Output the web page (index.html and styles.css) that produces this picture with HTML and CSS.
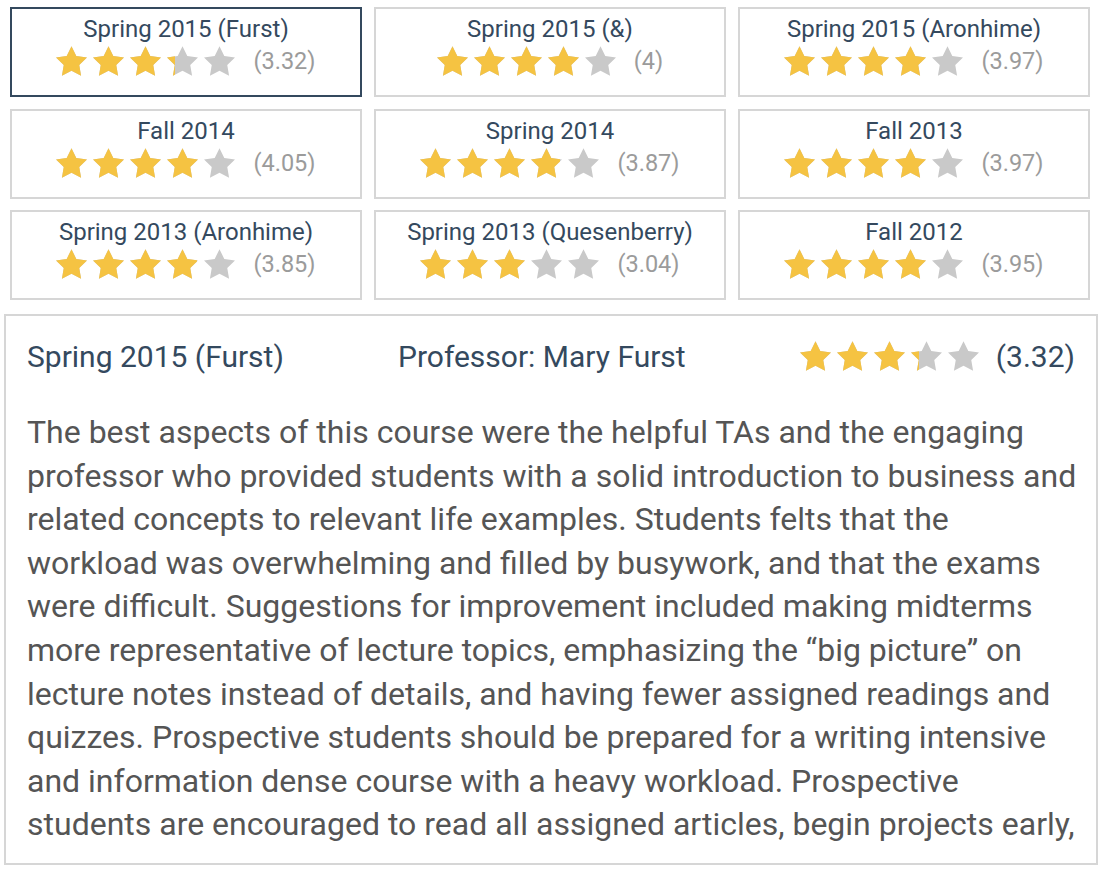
FILE: index.html
```html
<!DOCTYPE html>
<html>
<head>
<meta charset="utf-8">
<link rel="stylesheet" href="styles.css">
</head>
<body>
<svg class="defs" width="0" height="0" aria-hidden="true">
  <symbol id="star" viewBox="2 2 20 19.1">
    <path d="M12 2l3.09 6.26L22 9.27l-5 4.87 1.18 6.88L12 17.77l-6.18 3.25L7 14.140 2 9.27l6.91-1.01L12 2z"/>
  </symbol>
</svg>

<div class="page">
  <div class="terms">
    <div class="term active">
      <div class="term-title">Spring 2015 (Furst)</div>
      <div class="rating-row">
        <div class="stars">
          <div class="stars-bg"><svg><use href="#star"/></svg><svg><use href="#star"/></svg><svg><use href="#star"/></svg><svg><use href="#star"/></svg><svg><use href="#star"/></svg></div>
          <div class="stars-fg" style="width:66.4%"><svg><use href="#star"/></svg><svg><use href="#star"/></svg><svg><use href="#star"/></svg><svg><use href="#star"/></svg><svg><use href="#star"/></svg></div>
        </div>
        <span class="score">(3.32)</span>
      </div>
    </div>
    <div class="term">
      <div class="term-title">Spring 2015 (&amp;)</div>
      <div class="rating-row">
        <div class="stars">
          <div class="stars-bg"><svg><use href="#star"/></svg><svg><use href="#star"/></svg><svg><use href="#star"/></svg><svg><use href="#star"/></svg><svg><use href="#star"/></svg></div>
          <div class="stars-fg" style="width:80%"><svg><use href="#star"/></svg><svg><use href="#star"/></svg><svg><use href="#star"/></svg><svg><use href="#star"/></svg><svg><use href="#star"/></svg></div>
        </div>
        <span class="score">(4)</span>
      </div>
    </div>
    <div class="term">
      <div class="term-title">Spring 2015 (Aronhime)</div>
      <div class="rating-row">
        <div class="stars">
          <div class="stars-bg"><svg><use href="#star"/></svg><svg><use href="#star"/></svg><svg><use href="#star"/></svg><svg><use href="#star"/></svg><svg><use href="#star"/></svg></div>
          <div class="stars-fg" style="width:79.4%"><svg><use href="#star"/></svg><svg><use href="#star"/></svg><svg><use href="#star"/></svg><svg><use href="#star"/></svg><svg><use href="#star"/></svg></div>
        </div>
        <span class="score">(3.97)</span>
      </div>
    </div>

    <div class="term">
      <div class="term-title">Fall 2014</div>
      <div class="rating-row">
        <div class="stars">
          <div class="stars-bg"><svg><use href="#star"/></svg><svg><use href="#star"/></svg><svg><use href="#star"/></svg><svg><use href="#star"/></svg><svg><use href="#star"/></svg></div>
          <div class="stars-fg" style="width:81%"><svg><use href="#star"/></svg><svg><use href="#star"/></svg><svg><use href="#star"/></svg><svg><use href="#star"/></svg><svg><use href="#star"/></svg></div>
        </div>
        <span class="score">(4.05)</span>
      </div>
    </div>
    <div class="term">
      <div class="term-title">Spring 2014</div>
      <div class="rating-row">
        <div class="stars">
          <div class="stars-bg"><svg><use href="#star"/></svg><svg><use href="#star"/></svg><svg><use href="#star"/></svg><svg><use href="#star"/></svg><svg><use href="#star"/></svg></div>
          <div class="stars-fg" style="width:78.2%"><svg><use href="#star"/></svg><svg><use href="#star"/></svg><svg><use href="#star"/></svg><svg><use href="#star"/></svg><svg><use href="#star"/></svg></div>
        </div>
        <span class="score">(3.87)</span>
      </div>
    </div>
    <div class="term">
      <div class="term-title">Fall 2013</div>
      <div class="rating-row">
        <div class="stars">
          <div class="stars-bg"><svg><use href="#star"/></svg><svg><use href="#star"/></svg><svg><use href="#star"/></svg><svg><use href="#star"/></svg><svg><use href="#star"/></svg></div>
          <div class="stars-fg" style="width:79.4%"><svg><use href="#star"/></svg><svg><use href="#star"/></svg><svg><use href="#star"/></svg><svg><use href="#star"/></svg><svg><use href="#star"/></svg></div>
        </div>
        <span class="score">(3.97)</span>
      </div>
    </div>

    <div class="term">
      <div class="term-title">Spring 2013 (Aronhime)</div>
      <div class="rating-row">
        <div class="stars">
          <div class="stars-bg"><svg><use href="#star"/></svg><svg><use href="#star"/></svg><svg><use href="#star"/></svg><svg><use href="#star"/></svg><svg><use href="#star"/></svg></div>
          <div class="stars-fg" style="width:78.6%"><svg><use href="#star"/></svg><svg><use href="#star"/></svg><svg><use href="#star"/></svg><svg><use href="#star"/></svg><svg><use href="#star"/></svg></div>
        </div>
        <span class="score">(3.85)</span>
      </div>
    </div>
    <div class="term">
      <div class="term-title">Spring 2013 (Quesenberry)</div>
      <div class="rating-row">
        <div class="stars">
          <div class="stars-bg"><svg><use href="#star"/></svg><svg><use href="#star"/></svg><svg><use href="#star"/></svg><svg><use href="#star"/></svg><svg><use href="#star"/></svg></div>
          <div class="stars-fg" style="width:60.8%"><svg><use href="#star"/></svg><svg><use href="#star"/></svg><svg><use href="#star"/></svg><svg><use href="#star"/></svg><svg><use href="#star"/></svg></div>
        </div>
        <span class="score">(3.04)</span>
      </div>
    </div>
    <div class="term">
      <div class="term-title">Fall 2012</div>
      <div class="rating-row">
        <div class="stars">
          <div class="stars-bg"><svg><use href="#star"/></svg><svg><use href="#star"/></svg><svg><use href="#star"/></svg><svg><use href="#star"/></svg><svg><use href="#star"/></svg></div>
          <div class="stars-fg" style="width:79%"><svg><use href="#star"/></svg><svg><use href="#star"/></svg><svg><use href="#star"/></svg><svg><use href="#star"/></svg><svg><use href="#star"/></svg></div>
        </div>
        <span class="score">(3.95)</span>
      </div>
    </div>
  </div>

  <div class="detail">
    <div class="detail-head">
      <div class="detail-term">Spring 2015 (Furst)</div>
      <div class="detail-prof">Professor: Mary Furst</div>
      <div class="detail-rating">
        <div class="stars">
          <div class="stars-bg"><svg><use href="#star"/></svg><svg><use href="#star"/></svg><svg><use href="#star"/></svg><svg><use href="#star"/></svg><svg><use href="#star"/></svg></div>
          <div class="stars-fg" style="width:66.4%"><svg><use href="#star"/></svg><svg><use href="#star"/></svg><svg><use href="#star"/></svg><svg><use href="#star"/></svg><svg><use href="#star"/></svg></div>
        </div>
        <span class="detail-score">(3.32)</span>
      </div>
    </div>
    <p class="detail-text">The best aspects of this course were the helpful TAs and the engaging professor who provided students with a solid introduction to business and related concepts to relevant life examples. Students felts that the workload was overwhelming and filled by busywork, and that the exams were difficult. Suggestions for improvement included making midterms more representative of lecture topics, emphasizing the “big picture” on lecture notes instead of details, and having fewer assigned readings and quizzes. Prospective students should be prepared for a writing intensive and information dense course with a heavy workload. Prospective students are encouraged to read all assigned articles, begin projects early,</p>
  </div>
</div>
</body>
</html>
```

FILE: styles.css
```css
* {
  box-sizing: border-box;
}

body {
  margin: 0;
  background: #ffffff;
  font-family: Roboto, "Liberation Sans", Arial, sans-serif;
}

.defs {
  position: absolute;
  width: 0;
  height: 0;
}

.page {
  padding-top: 7px;
}

.terms {
  display: grid;
  grid-template-columns: repeat(3, 352px);
  grid-auto-rows: 90px;
  column-gap: 12px;
  row-gap: 11.5px;
  margin-left: 10px;
}

.term {
  border: 2px solid #d6d6d6;
  padding-top: 6px;
  display: flex;
  flex-direction: column;
  align-items: center;
}

.term.active {
  border-color: #34495e;
}

.term-title {
  font-size: 24px;
  line-height: 28px;
  color: #34495e;
}

.rating-row {
  display: flex;
  align-items: center;
  justify-content: center;
  gap: 18px;
  height: 36px;
}

.stars {
  position: relative;
  width: 179px;
  height: 30px;
}

.stars-bg,
.stars-fg {
  display: flex;
  gap: 6px;
  height: 30px;
}

.stars-bg {
  fill: #c9c9c9;
}

.stars-fg {
  position: absolute;
  left: 0;
  top: 0;
  overflow: hidden;
  fill: #f5c342;
}

.stars svg {
  width: 31px;
  height: 30px;
  flex-shrink: 0;
}

.score {
  font-size: 23.5px;
  color: #9b9b9b;
  line-height: 28px;
}

.detail {
  margin: 14px 0 0 4px;
  width: 1094px;
  height: 551px;
  border: 2px solid #d6d6d6;
  padding: 22px 21px 0 21px;
  overflow: hidden;
}

.detail-head {
  display: flex;
  justify-content: space-between;
  align-items: center;
  height: 36px;
  color: #34495e;
  font-size: 30px;
}

.detail-rating {
  display: flex;
  align-items: center;
  gap: 17px;
}

.detail-score {
  font-size: 30px;
  color: #34495e;
}

.detail-text {
  margin: 37px -6px 0 0;
  font-size: 32px;
  line-height: 43.6px;
  color: #555555;
}
```
